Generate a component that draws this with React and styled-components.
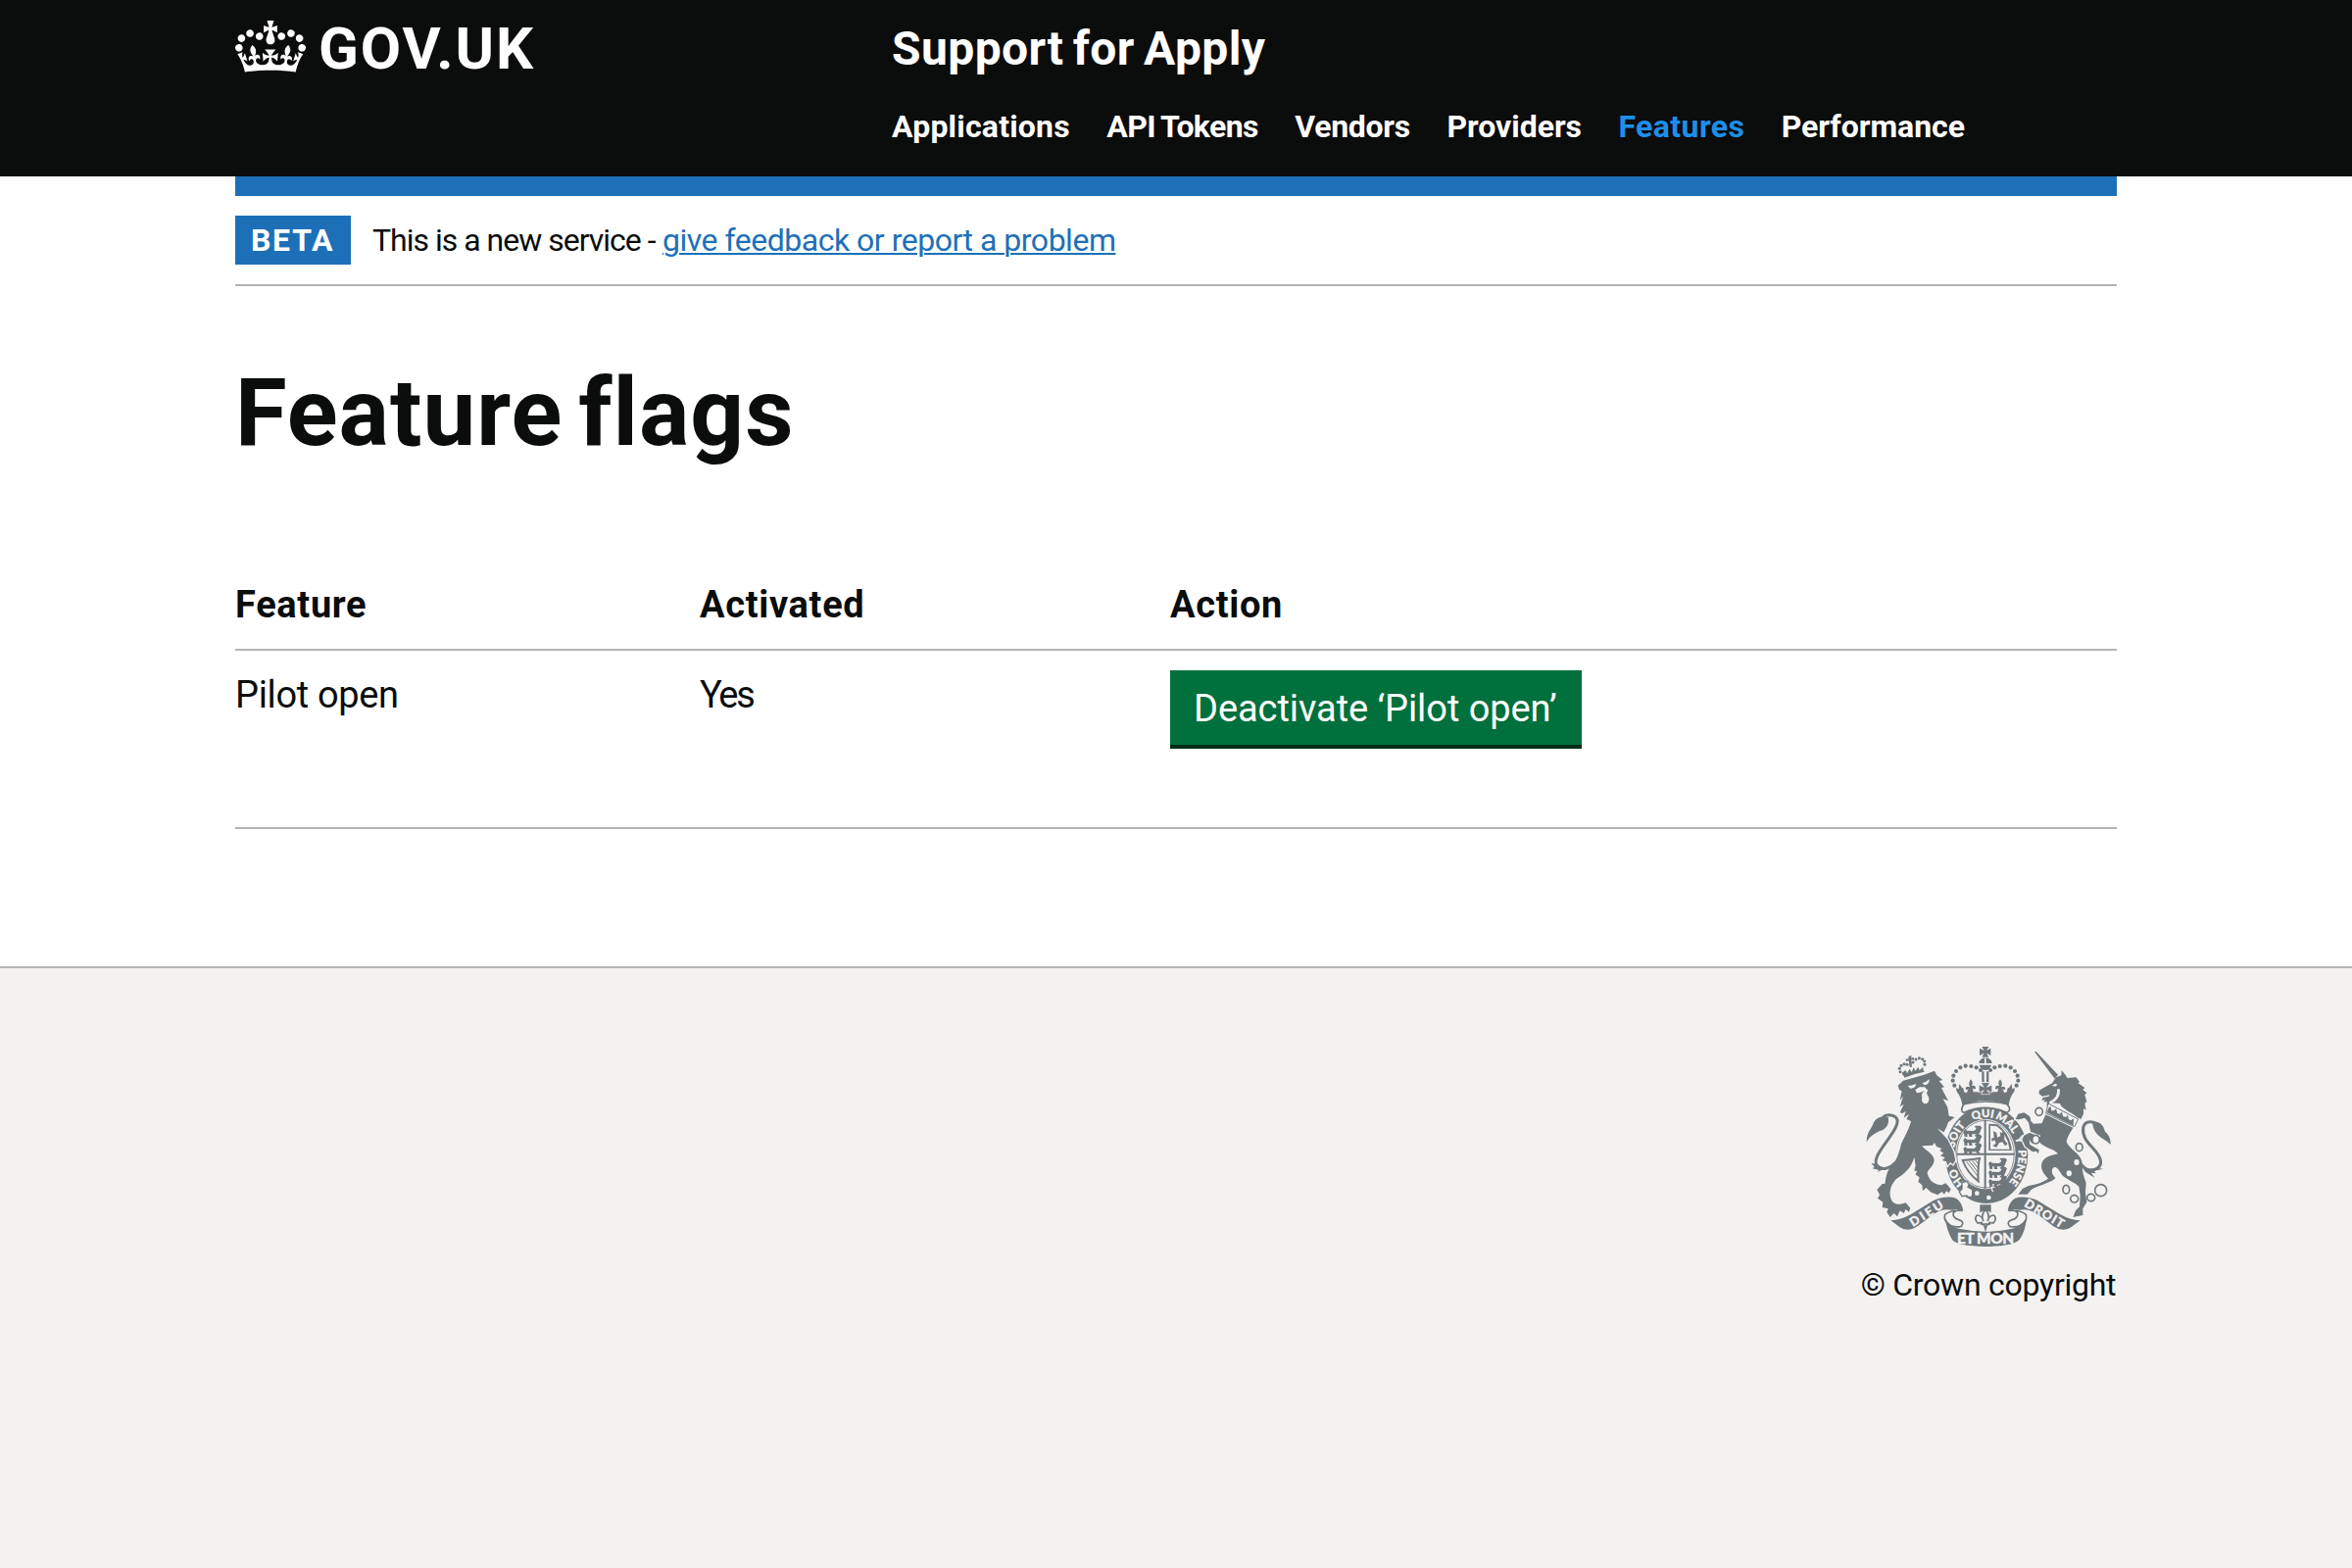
import React from "react";
import styled, { createGlobalStyle } from "styled-components";

const color = {
  black: "#0b0c0c",
  blue: "#1d70b8",
  active: "#1d8feb",
  border: "#b1b4b6",
  green: "#00703c",
  greenShadow: "#002d18",
  footer: "#f3f2f1",
  arms: "#6f777b",
};

const GlobalStyle = createGlobalStyle`
  *, *::before, *::after { box-sizing: border-box; }
  html, body { margin: 0; padding: 0; background: #fff; }
  body { font-family: Roboto, "Liberation Sans", sans-serif; color: ${color.black}; }
`;

const Page = styled.div`
  display: flex;
  flex-direction: column;
  min-height: 1600px;
`;

const Container = styled.div`
  width: 1920px;
  margin: 0 auto;
`;

const HeaderBar = styled.header`
  height: 180px;
  background: ${color.black};
  color: #fff;
`;

const HeaderInner = styled(Container)`
  display: grid;
  grid-template-columns: 670px 1fr;
`;

const Logo = styled.a`
  display: flex;
  align-items: flex-start;
  gap: 13px;
  padding-top: 14px;
  color: #fff;
  text-decoration: none;
`;

const CrownIcon = styled.svg`
  width: 72px;
  height: 53px;
  margin-top: 7px;
  fill: #fff;
`;

const LogoText = styled.span`
  font-size: 60px;
  line-height: 71px;
  font-weight: 700;
  letter-spacing: 1.92px;
`;

const HeaderContent = styled.div`
  padding-top: 21px;
`;

const ServiceName = styled.a`
  display: block;
  font-size: 48px;
  line-height: 57px;
  font-weight: 700;
  letter-spacing: 0.4px;
  word-spacing: -3px;
  color: #fff;
`;

const Nav = styled.nav`
  display: flex;
  gap: 37.4px;
  margin-top: 31px;
`;

const NavLink = styled.a`
  font-size: 32px;
  line-height: 40px;
  font-weight: 700;
  white-space: nowrap;
  color: ${(p) => (p.$active ? color.active : "#fff")};
  letter-spacing: ${(p) => p.$tracking}px;
  word-spacing: -1.5px;
`;

const BlueBar = styled.div`
  height: 20px;
  background: ${color.blue};
`;

const PhaseBanner = styled.div`
  display: flex;
  gap: 22px;
  padding: 20px 0;
  border-bottom: 2px solid ${color.border};
`;

const Tag = styled.strong`
  width: 118px;
  padding: 5px 16px;
  background: ${color.blue};
  color: #fff;
  font-size: 32px;
  line-height: 40px;
  letter-spacing: 1.7px;
`;

const PhaseText = styled.span`
  padding: 5px 0;
  font-size: 32px;
  line-height: 40px;
  letter-spacing: -1px;
`;

const Link = styled.a`
  margin-left: 0.5px;
  color: ${color.blue};
  letter-spacing: -0.49px;
  text-decoration: underline;
  text-decoration-thickness: 2px;
  text-underline-offset: 2px;
`;

const Title = styled.h1`
  margin: 73px 0 95px;
  font-size: 96px;
  line-height: 112px;
  font-weight: 700;
  letter-spacing: 1px;
  word-spacing: -9px;
`;

const Table = styled.table`
  width: 100%;
  table-layout: fixed;
  border-collapse: separate;
  border-spacing: 0;
  font-size: 38px;
  line-height: 50px;
`;

const Col = styled.col`
  width: ${(p) => p.$width}px;
`;

const HeadCell = styled.th`
  padding: 20px 0;
  border-bottom: 2px solid ${color.border};
  text-align: left;
  font-weight: 700;
  letter-spacing: 0.68px;
`;

const Cell = styled.td`
  padding: 20px 0;
  border-bottom: 2px solid ${color.border};
  vertical-align: top;
  letter-spacing: ${(p) => p.$tracking || 0}px;
`;

const Button = styled.button`
  display: block;
  width: 420px;
  margin: 0 0 60px;
  padding: 14px 0 12px 24px;
  border: 0;
  border-bottom: 4px solid ${color.greenShadow};
  border-radius: 0;
  background: ${color.green};
  color: #fff;
  font: 400 38px/50px Roboto, "Liberation Sans", sans-serif;
  letter-spacing: -0.06px;
  text-align: left;
  white-space: nowrap;
`;

const Footer = styled.footer`
  flex: 1;
  margin-top: 140px;
  padding-top: 80px;
  border-top: 2px solid ${color.border};
  background: ${color.footer};
`;

const FooterInner = styled(Container)`
  display: flex;
  justify-content: flex-end;
`;

const Copyright = styled.a`
  display: flex;
  flex-direction: column;
  align-items: center;
  gap: 19px;
  width: 262px;
  font-size: 32px;
  line-height: 40px;
  letter-spacing: -0.26px;
  white-space: nowrap;
`;

const ArmsSvg = styled.svg`
  display: block;
  width: 250px;
  height: 204px;
`;

const Lettering = styled.text`
  font-family: Lato, sans-serif;
  font-weight: 900;
  letter-spacing: 0;
  fill: ${color.footer};
  stroke: ${color.footer};
  stroke-width: 1px;
  text-anchor: middle;
`;

function Crown() {
  return (
    <CrownIcon viewBox="0 0 132 97" aria-hidden="true">
      <path
        fillRule="evenodd"
        d="M25 30.2c3.5 1.5 7.7-.2 9.1-3.7 1.5-3.6-.2-7.8-3.9-9.2-3.6-1.4-7.6.3-9.1 3.9-1.4 3.5.3 7.5 3.9 9zM9 39.5c3.6 1.5 7.8-.2 9.2-3.7 1.5-3.6-.2-7.8-3.9-9.1-3.6-1.5-7.6.2-9.1 3.8-1.4 3.5.3 7.5 3.8 9zM4.4 57.2c3.5 1.5 7.7-.2 9.1-3.8 1.5-3.6-.2-7.7-3.9-9.1-3.5-1.5-7.6.3-9.1 3.8-1.4 3.5.3 7.6 3.9 9.1zm38.3-21.4c3.5 1.5 7.7-.2 9.1-3.8 1.5-3.6-.2-7.7-3.9-9.1-3.6-1.5-7.6.3-9.1 3.8-1.3 3.6.4 7.7 3.9 9.1zm64.4-5.6c-3.6 1.5-7.8-.2-9.1-3.7-1.5-3.6.2-7.8 3.8-9.2 3.6-1.4 7.7.3 9.2 3.9 1.3 3.5-.4 7.5-3.9 9zm15.9 9.3c-3.6 1.5-7.7-.2-9.1-3.7-1.5-3.6.2-7.8 3.7-9.1 3.6-1.5 7.7.2 9.2 3.8 1.5 3.5-.3 7.5-3.8 9zm4.7 17.7c-3.6 1.5-7.8-.2-9.2-3.8-1.5-3.6.2-7.7 3.9-9.1 3.6-1.5 7.7.3 9.2 3.8 1.3 3.5-.4 7.6-3.9 9.1zM89.3 35.8c-3.6 1.5-7.8-.2-9.2-3.8-1.4-3.6.2-7.7 3.9-9.1 3.6-1.5 7.7.3 9.2 3.8 1.4 3.6-.3 7.7-3.9 9.1zM69.7 17.7l8.9 4.7V9.3l-8.9 2.8c-.2-.3-.5-.6-.9-.9L72.4 0H59.6l3.5 11.2c-.3.3-.6.5-.9.9l-8.8-2.8v13.1l8.8-4.7c.3.3.6.7.9.9l-5 15.4v.1c-.2.8-.4 1.6-.4 2.4 0 4.1 3.1 7.5 7 8.1h.2c.3 0 .7.1 1 .1.4 0 .7 0 1-.1h.2c4-.6 7.1-4.1 7.1-8.1 0-.8-.1-1.7-.4-2.4V34l-5.1-15.4c.4-.2.7-.6 1-.9zM66 92.8c16.9 0 32.8 1.1 47.1 3.2 4-16.9 8.9-26.7 14-33.5l-9.6-3.4c1 4.9 1.1 7.2 0 10.2-1.5-1.4-3-4.3-4.2-8.7L108.6 76c2.8-2 5-3.2 7.5-3.3-4.4 9.4-10 11.9-13.6 11.2-4.3-.8-6.3-4.6-5.6-7.9 1-4.7 5.7-5.9 8-.5 4.3-8.7-3-11.4-7.6-8.8 7.1-7.2 7.9-13.5 2.1-21.1-8 6.1-8.1 12.3-4.5 20.8-4.7-5.4-12.1-2.5-9.5 6.2 3.4-5.2 7.9-2 7.2 3.1-.6 4.3-6.4 7.8-13.5 7.2-10.3-.9-10.9-8-11.2-13.8 2.5-.5 7.1 1.8 11 7.3L80.2 60c-4.1 4.4-8 5.3-12.3 5.4 1.4-4.4 8-11.6 8-11.6H55.5s6.4 7.2 7.9 11.6c-4.2-.1-8-1-12.3-5.4l1.4 16.4c3.9-5.5 8.5-7.7 10.9-7.3-.3 5.8-.9 12.8-11.1 13.8-7.2.6-12.9-2.9-13.5-7.2-.7-5 3.8-8.3 7.1-3.1 2.7-8.7-4.6-11.6-9.4-6.2 3.7-8.5 3.6-14.7-4.6-20.8-5.8 7.6-5 13.9 2.2 21.1-4.7-2.6-11.9.1-7.7 8.8 2.3-5.5 7.1-4.2 8.1.5.7 3.3-1.3 7.1-5.7 7.9-3.5.7-9-1.8-13.5-11.2 2.5.1 4.7 1.3 7.5 3.3l-4.7-15.4c-1.2 4.4-2.7 7.2-4.3 8.7-1.1-3-.9-5.3 0-10.2l-9.5 3.4c5 6.9 9.9 16.7 14 33.5 14.8-2.1 30.8-3.2 47.7-3.2z"
      />
    </CrownIcon>
  );
}

const archPearls = [
  [393, 126], [380, 118], [364, 114], [347, 113], [331, 118], [318, 129],
  [310, 143], [308, 158], [313, 173],
];

const mottoWords = [
  ["HO", 15], ["SOIT", 34], ["QUI", 48.5], ["MAL", 59.5], ["Y", 68.5], ["PENSE", 80.5],
];

const passant =
  "M0 6l6-7 5 5 20 1q8-1 9-9l-6-3 4-4 14 0 5 6-4 8q-1 8-6 11l8 9-11 0-5-8-13 0 2 8-10 0-1-8-5 0 1 8-10-1 0-8z";

function PassantLions({ x, y }) {
  return [0, 27, 54].map((dy) => (
    <path key={dy} d={passant} transform={`translate(${x} ${y + dy})`} />
  ));
}

function Scroll() {
  return (
    <>
      <path d="M118 586Q150 584 180 567L250 524Q290 508 318 518 336 530 340 556 322 550 306 554L290 553Q268 552 240 574L200 604Q168 624 145 606Z" />
      <path
        d="M336 556Q300 554 284 568 278 590 302 602 318 608 334 604 346 590 326 584 306 578 310 562 320 552 338 556"
        fill={color.footer}
        stroke={color.arms}
        strokeWidth="5"
      />
    </>
  );
}

function CrownSide() {
  return (
    <>
      {archPearls.map(([x, y]) => (
        <circle key={`${x}-${y}`} cx={x} cy={y} r="6.3" />
      ))}
      <path d="M363 154q9 10 3 20 12-4 12 8-5 4-9-1l2 12 38 0 0 26q-38 0-72 15-3-26-17-42l-2-12 8 4 2-16 8 12q6-2 6 12l8 4 6-12q-8 6-9-3 2-8 13-3-6-12 3-24z" />
    </>
  );
}

function Lion() {
  return (
    <g transform="translate(30 30)">
      <path
        stroke={color.footer}
        strokeWidth="8"
        paintOrder="stroke"
        d="M110 143L126 128 134 126 190 110 222 98 229 112 247 126 236 129 252 148 243 150 264 190 248 184 262 210 266 236 284 240 264 256 256 276 250 286 230 274 262 308 280 345 286 372 278 384 270 378 262 388 258 376 246 372 254 364 240 358 250 350 238 342 244 336 228 330 222 318 216 326 184 328C190 340 216 348 221 370 222 390 200 400 200 412 208 440 224 446 244 448L256 442 272 460 266 472 258 466 252 476 244 468 232 478 212 470 196 456 186 466 184 448 172 438 176 424 164 416 168 404 160 404 164 388 160 362C150 400 128 412 104 430 92 444 84 460 86 480 90 500 100 508 118 506L134 502 148 518 144 530 134 522 128 534 116 526 108 544 98 534 86 546 76 530 80 520 62 516 64 500 48 488 54 478 46 462 62 444 70 444C74 420 78 396 100 376 108 366 116 340 120 322 132 296 146 272 150 252L136 246 144 230 128 242 134 222 124 228 116 226 128 200 116 208 126 176 116 188 122 160 114 156Z"
      />
      <path
        d="M104 378C80 400 60 404 46 388 32 370 60 336 84 302 112 262 116 244 96 236 84 232 72 232 64 240"
        fill="none"
        stroke={color.arms}
        strokeWidth="9"
      />
      <path d="M14 316C14 284 30 276 36 256 44 240 64 234 80 240 84 256 78 272 62 280 44 286 26 296 14 316Z" />
      <path d="M28 380L44 384 64 400 46 409 52 402 32 397 38 392Z" />
      <g fill={color.footer}>
        <path d="M140 144Q152 144 166 138 164 152 148 152ZM184 136Q198 132 206 124 208 138 192 142Z" />
        <path d="M163 156L176 148 192 148 202 158 196 168 188 160 178 164 168 166Z" />
        <ellipse cx="194" cy="185" rx="11" ry="14" />
        <path d="M182 176L186 162 198 164 202 180Z" />
      </g>
      <path d="M130 119L126 107 158 102 186 92 191 101Q160 106 130 119ZM122 104L134 96 138 106 146 92 152 102 158 88 164 98 172 86 176 96 188 86 187 97 126 113Z" />
      {[[117, 101], [115, 91], [120, 82], [129, 77], [138, 79], [156, 72], [165, 63], [175, 59], [185, 62], [191, 69], [192, 79]].map(
        ([x, y]) => (
          <circle key={`${x}-${y}`} cx={x} cy={y} r="4.6" />
        )
      )}
      <path d="M143 53l9-1-2 7 8-3 2 9-9-1 2 22-7 1-3-21-8 4-1-9 8 1z" />
    </g>
  );
}

const chainRings = [
  [182, 223, 11, 12], [172, 308, 11, 13], [305, 332, 10, 12], [265, 461, 10, 13],
  [290, 490, 12, 11], [341, 486, 12, 11], [371, 464, 18, 18],
];

function Unicorn() {
  return (
    <g transform="translate(390 30)">
      <path d="M168 40L173 39 240 110 230 122Z" />
      <path d="M182 158L200 148 222 136 234 118 250 112 251 97 264 112 268 120 296 118 306 132 302 136 322 150 316 156 328 166 322 172 328 192 322 198 326 218 318 214 318 230 310 246 298 240C280 224 250 214 246 198L214 196 206 206 206 192 196 194 200 186 190 190 194 180 212 176 214 172 192 176 182 168Z" />
      <path d="M241 154Q246 182 214 197" fill="none" stroke={color.footer} strokeWidth="8" />
      <path d="M221 143L232 137 238 141 232 146Z" fill={color.footer} />
      <g stroke={color.footer} strokeWidth="8" paintOrder="stroke">
        <path d="M200 312L160 320 152 308 154 324 182 340 180 352 174 344 162 346 140 330 130 308 136 296 160 284 190 284Z" />
        <path d="M196 300L156 284 150 256 138 242 122 247 110 246 118 230 136 226 152 236 164 260 204 258Z" />
      </g>
      <path d="M202 232L286 272C276 290 268 300 266 316 276 340 310 350 314 380 314 410 320 424 326 440L324 470 328 500 316 520 316 540 286 546 294 526 306 514 308 480 304 452C292 440 276 436 260 424 244 410 244 396 230 392 220 396 216 410 232 426 222 440 180 448 158 462L146 476 118 476 132 458 150 450C176 446 196 438 210 428 196 414 186 400 190 382 196 362 214 358 240 352 230 338 200 334 184 318L190 260Z" />
      <path
        d="M210 198L302 246 290 269 203 228Z"
        fill={color.footer}
        stroke={color.arms}
        strokeWidth="3"
      />
      <path d="M206 226L211 212 217 206 220 220 228 220 234 214 238 228 246 230 252 223 255 237 264 240 270 233 272 246 280 250 288 244 287 266Z" />
      <path
        d="M376 274C350 246 322 250 317 272 314 300 330 316 346 334 376 366 380 390 352 400 336 408 320 396 310 384"
        fill="none"
        stroke={color.arms}
        strokeWidth="9"
      />
      <path d="M346 258C368 248 380 268 384 284 394 292 402 304 401 324 390 312 374 306 362 294 350 282 346 268 346 258Z" />
      <path d="M306 380L324 408 352 425 342 410 356 412 350 404 379 398 358 396 330 398Z" />
      {chainRings.map(([x, y, rx, ry]) => (
        <ellipse
          key={`${x}-${y}`}
          cx={x}
          cy={y}
          rx={rx}
          ry={ry}
          fill={y === 464 ? "none" : color.footer}
          stroke={color.arms}
          strokeWidth="5"
        />
      ))}
      <g fill={color.footer}>
        <ellipse cx="163" cy="247" rx="7" ry="9" />
        <ellipse cx="297" cy="378" rx="8" ry="9" />
        <ellipse cx="274" cy="412" rx="8" ry="9" />
      </g>
    </g>
  );
}

function Garter() {
  return (
    <>
      <ellipse cx="411" cy="385" rx="131" ry="153" fill={color.footer} />
      <ellipse cx="411" cy="385" rx="127" ry="149" />
      <ellipse cx="408" cy="383" rx="92" ry="107" fill={color.footer} />
      <path
        id="motto-path"
        d="M410 502A98 115 0 0 1 410 270A98 115 0 0 1 410 502"
        fill="none"
      />
      {mottoWords.map(([word, offset]) => (
        <Lettering key={word} fontSize="34">
          <textPath href="#motto-path" startOffset={`${offset}%`}>
            {word}
          </textPath>
        </Lettering>
      ))}
      <path d="M404 278h6v210h-6zM320 380h177v6h-177z" />
      <ellipse cx="408" cy="383" rx="88" ry="103" fill="none" stroke={color.arms} strokeWidth="2.5" />
      <PassantLions x={340} y={307} />
      <PassantLions x={417} y={406} />
      <path d="M418 290v82h70v-10q-10-48-44-70zM423 296l19 2q30 18 40 70h-59z" fillRule="evenodd" />
      <path d="M432 312l10 6 2 14 10-4-2-12 8 2 2-6 8 8-4 6 0 14 10 12-8 6-8-12-10 2-8 14-12-4 10-8-4-10-8 4-2-8 8-4z" />
      <path
        d="M338 402Q362 400 390 396L388 404Q384 440 386 466 352 440 338 402Z"
        fill="none"
        stroke={color.arms}
        strokeWidth="6"
      />
      <path
        d="M350 406L384 450M358 404L386 440M368 403L387 428M377 402L388 416"
        stroke={color.arms}
        strokeWidth="3"
      />
      <path
        d="M336 470l14-4 8 10-4 8 14 8 2 18-12 6-8-6-14 2-8-14 8-8z"
        fill={color.footer}
        stroke={color.arms}
        strokeWidth="4"
      />
      <path d="M366 482Q420 506 474 504L466 518Q410 536 366 514Z" />
      <path d="M430 482q-6 10 2 16" stroke={color.footer} strokeWidth="4" fill="none" />
      <circle cx="382" cy="503" r="7" fill={color.footer} />
      <circle cx="418" cy="516" r="7" fill={color.footer} />
    </>
  );
}

function RoyalArms() {
  return (
    <ArmsSvg viewBox="42 54 750 612" fill={color.arms} aria-hidden="true">
      <Garter />
      <path
        d="M342 230Q328 250 342 256 408 226 474 256 490 248 474 230 408 214 342 230Z"
        fill={color.footer}
        stroke={color.arms}
        strokeWidth="5"
      />
      <CrownSide />
      <g transform="matrix(-1 0 0 1 816 0)">
        <CrownSide />
      </g>
      <path d="M397 54h21l-7 12 13-7v22l-13-7 7 12h-21l7-12-14 7V59l14 7zM388 105a20 17 0 0 1 40 0zM389 110h37q-4 16-18 16t-19-16zM397 130h7v32h-7zM411 130h7v32h-7z" />
      <path d="M405 88h5v18h-5z" fill={color.footer} />
      <path
        d="M394 164h28l-9 14 15-7v24l-15-7 9 12h-28l9-12-15 7v-24l15 7z"
        stroke={color.footer}
        strokeWidth="2"
      />
      <Lion />
      <Unicorn />
      <Scroll />
      <g transform="matrix(-1 0 0 1 816 0)">
        <Scroll />
      </g>
      <path d="M284 578Q300 606 330 612 408 628 486 612 514 606 534 578 530 618 514 642 500 665 408 666 320 664 306 645 290 618 284 578Z" />
      <Lettering fontSize="38" textLength="114" transform="translate(234 576) rotate(-32)">
        DIEU
      </Lettering>
      <Lettering fontSize="38" textLength="134" transform="translate(582 576) rotate(31)">
        DROIT
      </Lettering>
      <Lettering fontSize="46" textLength="174" x="408" y="656">
        ET MON
      </Lettering>
      <path d="M391 538h34v24l-17-8-17 8z" />
      <path
        d="M408 552Q424 572 414 588 420 570 434 570 444 582 432 594L420 592 418 598 412 600 408 613 404 600 398 598 396 592 384 594Q372 582 382 570 396 570 402 588 392 572 408 552ZM392 597h32"
        fill={color.footer}
        stroke={color.arms}
        strokeWidth="5"
      />
    </ArmsSvg>
  );
}

const navItems = [
  ["Applications", 0.2],
  ["API Tokens", -0.62],
  ["Vendors", -0.27],
  ["Providers", -0.02],
  ["Features", 0.42],
  ["Performance", -0.04],
];

export default function App() {
  return (
    <Page>
      <GlobalStyle />
      <HeaderBar>
        <HeaderInner>
          <Logo>
            <Crown />
            <LogoText>GOV.UK</LogoText>
          </Logo>
          <HeaderContent>
            <ServiceName>Support for Apply</ServiceName>
            <Nav>
              {navItems.map(([label, tracking]) => (
                <NavLink key={label} $tracking={tracking} $active={label === "Features"}>
                  {label}
                </NavLink>
              ))}
            </Nav>
          </HeaderContent>
        </HeaderInner>
      </HeaderBar>
      <Container>
        <BlueBar />
        <PhaseBanner>
          <Tag>BETA</Tag>
          <PhaseText>
            This is a new service - <Link>give feedback or report a problem</Link>
          </PhaseText>
        </PhaseBanner>
        <main>
          <Title>Feature flags</Title>
          <Table>
            <colgroup>
              <Col $width={474} />
              <Col $width={480} />
              <Col $width={966} />
            </colgroup>
            <thead>
              <tr>
                <HeadCell>Feature</HeadCell>
                <HeadCell>Activated</HeadCell>
                <HeadCell>Action</HeadCell>
              </tr>
            </thead>
            <tbody>
              <tr>
                <Cell $tracking={-0.34}>Pilot open</Cell>
                <Cell $tracking={-2.3}>Yes</Cell>
                <Cell>
                  <Button>Deactivate ‘Pilot open’</Button>
                </Cell>
              </tr>
            </tbody>
          </Table>
        </main>
      </Container>
      <Footer>
        <FooterInner>
          <Copyright>
            <RoyalArms />
            <span>© Crown copyright</span>
          </Copyright>
        </FooterInner>
      </Footer>
    </Page>
  );
}
